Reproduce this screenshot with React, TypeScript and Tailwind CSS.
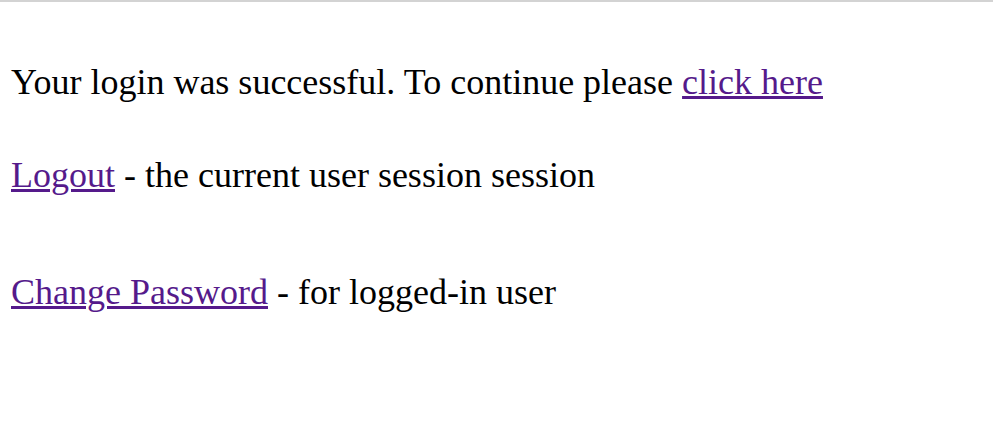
export default function App() {
  return (
    <div className="min-h-screen bg-white border-t-2 border-[#d3d3d3] px-[11px] font-['Liberation_Serif',serif] text-[36px] leading-[40px] text-black">
      <p className="mt-[60px]">
        Your login was successful. To continue please{" "}
        <a href="#" className="text-[#551a8b] underline decoration-[3px] underline-offset-[2px]">
          click here
        </a>
      </p>
      <p className="mt-[53px]">
        <a href="#" className="text-[#551a8b] underline decoration-[3px] underline-offset-[2px]">
          Logout
        </a>{" "}
        - the current user session session
      </p>
      <p className="mt-[77px]">
        <a href="#" className="text-[#551a8b] underline decoration-[3px] underline-offset-[2px]">
          Change Password
        </a>{" "}
        - for logged-in user
      </p>
    </div>
  );
}
